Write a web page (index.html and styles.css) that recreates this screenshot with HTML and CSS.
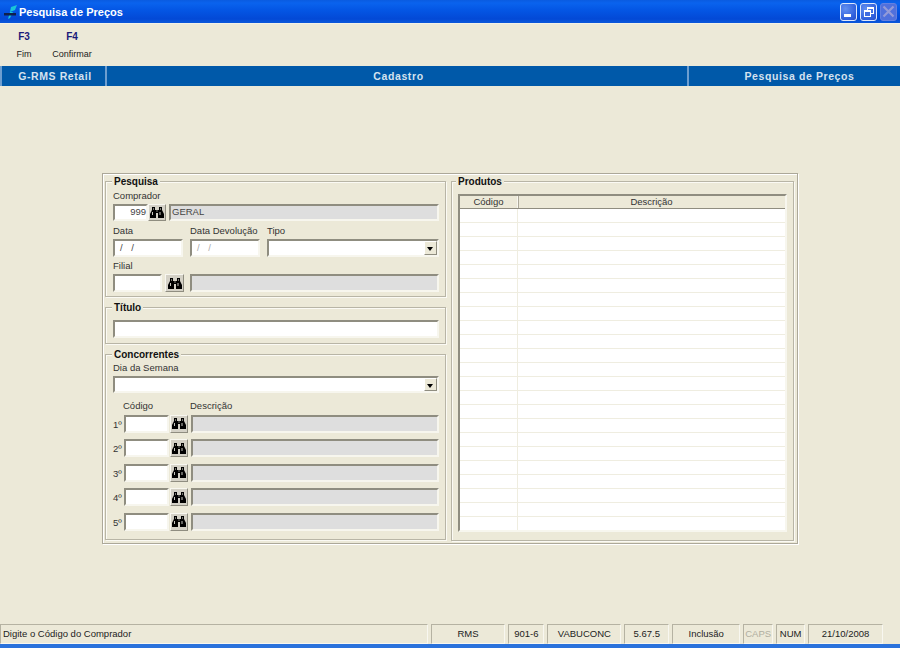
FILE: index.html
```html
<!DOCTYPE html>
<html lang="pt-BR">
<head>
<meta charset="utf-8">
<title>Pesquisa de Preços</title>
<link rel="stylesheet" href="styles.css">
</head>
<body>
<svg class="defs" width="0" height="0"><defs>
<symbol id="bino" viewBox="0 0 14 11">
<path d="M2 0h3v3h4v-3h3v3l2 4v4h-6v-5h-2v5h-6v-4l2-4z" fill="#000"/>
<path d="M3 1h1v2h-1zM10 1h1v2h-1zM6 3.500h2v1h-2z" fill="#77776f"/>
<path d="M2 5h1v3h-1zM9.500 5h1v3h-1z" fill="#c8c8c0"/>
</symbol>
</defs></svg>
<header class="titlebar">
  <svg class="appicon" width="14" height="14" viewBox="0 0 14 14"><path d="M13 0l-2 5-5 2 1-5z" fill="#19c6d8"/><path d="M6 7h3l-3 6-2 1z" fill="#19c6d8"/><rect x="0" y="8" width="12" height="2.500" fill="#10204a"/></svg>
  <span class="title">Pesquisa de Preços</span>
  <div class="winbtns">
    <div class="winbtn"><span class="min-glyph"></span></div>
    <div class="winbtn"><span class="res-back"></span><span class="res-front"></span></div>
    <div class="winbtn off"><svg width="13" height="13" viewBox="0 0 13 13"><path d="M1.500 1.500l10 10M11.500 1.500l-10 10" stroke="#939ad8" stroke-width="2.200"/></svg></div>
  </div>
</header>
<nav class="toolbar">
  <div class="tool t1"><b>F3</b><span>Fim</span></div>
  <div class="tool t2"><b>F4</b><span>Confirmar</span></div>
</nav>
<div class="bluebar">
  <div class="bseg b1">G-RMS Retail</div>
  <div class="bseg b2">Cadastro</div>
  <div class="bseg b3">Pesquisa de Preços</div>
</div>
<main class="main">
  <section class="panel">
    <div class="leftcol">
      <div class="group g-pesq">
        <span class="legend">Pesquisa</span>
        <label class="lbl">Comprador</label>
        <div class="row h17">
          <div class="field w35 num">999</div>
          <button class="find w18"><svg class="ico"><use href="#bino"/></svg></button>
          <div class="field ro grow ml3">GERAL</div>
        </div>
        <div class="row top4 gap7">
          <div class="col w70"><label class="lbl">Data</label><div class="field h18 date">/ /</div></div>
          <div class="col w70"><label class="lbl">Data Devolução</label><div class="field h18 date dim">/ /</div></div>
          <div class="col grow"><label class="lbl">Tipo</label><div class="field h18 combo"><span class="arrow"></span></div></div>
        </div>
        <label class="lbl top3">Filial</label>
        <div class="row h18">
          <div class="field w49"></div>
          <button class="find w19 ml3"><svg class="ico"><use href="#bino"/></svg></button>
          <div class="field ro grow ml6"></div>
        </div>
      </div>
      <div class="group g-tit">
        <span class="legend">Título</span>
        <div class="field h18"></div>
      </div>
      <div class="group g-conc">
        <span class="legend">Concorrentes</span>
        <label class="lbl">Dia da Semana</label>
        <div class="field h17 combo lblgap"><span class="arrow"></span></div>
        <div class="heads"><span class="hcod">Código</span><span>Descrição</span></div>
        <div class="lines">
          <div class="line"><span class="ord">1º</span><div class="field w45"></div><button class="find w18 ml1"><svg class="ico"><use href="#bino"/></svg></button><div class="field ro grow ml3"></div></div>
          <div class="line"><span class="ord">2º</span><div class="field w45"></div><button class="find w18 ml1"><svg class="ico"><use href="#bino"/></svg></button><div class="field ro grow ml3"></div></div>
          <div class="line"><span class="ord">3º</span><div class="field w45"></div><button class="find w18 ml1"><svg class="ico"><use href="#bino"/></svg></button><div class="field ro grow ml3"></div></div>
          <div class="line"><span class="ord">4º</span><div class="field w45"></div><button class="find w18 ml1"><svg class="ico"><use href="#bino"/></svg></button><div class="field ro grow ml3"></div></div>
          <div class="line"><span class="ord">5º</span><div class="field w45"></div><button class="find w18 ml1"><svg class="ico"><use href="#bino"/></svg></button><div class="field ro grow ml3"></div></div>
        </div>
      </div>
    </div>
    <div class="group g-prod">
      <span class="legend">Produtos</span>
      <div class="table">
        <div class="thead"><div class="th c1">Código</div><div class="th c2">Descrição</div></div>
        <div class="tbody">
          <div class="tr"><i></i></div><div class="tr"><i></i></div><div class="tr"><i></i></div><div class="tr"><i></i></div>
          <div class="tr"><i></i></div><div class="tr"><i></i></div><div class="tr"><i></i></div><div class="tr"><i></i></div>
          <div class="tr"><i></i></div><div class="tr"><i></i></div><div class="tr"><i></i></div><div class="tr"><i></i></div>
          <div class="tr"><i></i></div><div class="tr"><i></i></div><div class="tr"><i></i></div><div class="tr"><i></i></div>
          <div class="tr"><i></i></div><div class="tr"><i></i></div><div class="tr"><i></i></div><div class="tr"><i></i></div>
          <div class="tr"><i></i></div><div class="tr"><i></i></div><div class="tr"><i></i></div>
        </div>
      </div>
    </div>
  </section>
</main>
<footer class="status">
  <div class="sb s0">Digite o Código do Comprador</div>
  <div class="sb s1">RMS</div>
  <div class="sb s2">901-6</div>
  <div class="sb s3">VABUCONC</div>
  <div class="sb s4">5.67.5</div>
  <div class="sb s5">Inclusão</div>
  <div class="sb s6 dimtxt">CAPS</div>
  <div class="sb s7">NUM</div>
  <div class="sb s8">21/10/2008</div>
</footer>
<div class="bottomline"></div>
</body>
</html>
```
FILE: styles.css
```css
* { box-sizing: border-box; }
html, body { margin: 0; height: 100%; }
body {
  width: 900px; height: 648px; overflow: hidden;
  background: #ece9d8; color: #222;
  font: 9.5px/12px "Liberation Sans", Arial, sans-serif;
  display: flex; flex-direction: column;
}
.defs { position: absolute; }

.titlebar {
  height: 24px; flex: none; display: flex; align-items: center; padding: 0 3px 1px 4px;
  background: linear-gradient(#0a5be0 0, #0a63ee 3px, #0456e4 10px, #0349d6 19px, #0a56da 22px, #0a56da 23px, #f3f1e6 23px);
}
.appicon { flex: none; }
.title { margin-left: 1px; color: #fff; font: bold 11px/14px "Liberation Sans", Arial, sans-serif; }
.winbtns { margin-left: auto; display: flex; gap: 3px; }
.winbtn {
  position: relative; width: 17px; height: 18px; border-radius: 3px; border: 1px solid #dfe8fb;
  background: radial-gradient(circle at 30% 30%, #6390f0, #2f5fdc 70%, #2a50c8);
  display: flex; align-items: center; justify-content: center;
}
.winbtn.off { background: #5070dc; border-color: #6480e0; }
.min-glyph { position: absolute; left: 3px; bottom: 3px; width: 7px; height: 3px; background: #fff; }
.res-back { position: absolute; left: 6px; top: 3px; width: 7px; height: 7px; border: 1px solid #fff; border-top-width: 2px; }
.res-front { position: absolute; left: 3px; top: 6px; width: 7px; height: 7px; border: 1px solid #fff; border-top-width: 2px; background: #3f6ce0; }

.toolbar { height: 42px; flex: none; display: flex; padding-top: 7px; }
.tool { display: flex; flex-direction: column; align-items: center; font-size: 9px; }
.tool b { color: #1a1a78; font-size: 10px; line-height: 12px; margin-bottom: 5px; }
.t1 { width: 48px; }
.t2 { width: 48px; }

.bluebar { height: 20px; flex: none; display: flex; background: #0059a9; color: #d5e2ef; font: bold 10.5px/20px "Liberation Sans", Arial, sans-serif; letter-spacing: .6px; }
.bseg { text-align: center; }
.b1 { width: 107px; padding-left: 3px; border-left: 2px solid #6d9ed0; border-right: 2px solid #6d9ed0; }
.b2 { width: 580px; padding-left: 3px; }
.b3 { flex: 1; border-left: 2px solid #6d9ed0; padding-left: 11px; margin-right: 1px; }

.main { flex: 1; min-height: 0; padding: 87px 0 0 102px; }
.panel {
  width: 696px; height: 371px; padding: 7px 3px 3px;
  display: flex; gap: 5px;
  border: 1px solid #aca899; box-shadow: inset 1px 1px 0 #fff, 1px 1px 0 #fff;
}
.leftcol { width: 341px; flex: none; display: flex; flex-direction: column; gap: 10px; margin-left: -1px; }

.group { position: relative; border: 1px solid #b8b5a6; box-shadow: inset 1px 1px 0 #fbfaf4, 1px 1px 0 #fbfaf4; padding: 0 6px 0 7px; }
.legend { position: absolute; top: -7px; left: 6px; padding: 0 2px; background: #ece9d8; color: #111; font: bold 10px/13px "Liberation Sans", Arial, sans-serif; }
.g-pesq { height: 116px; padding-top: 8px; }
.g-tit { height: 37px; padding-top: 12px; }
.g-conc { height: 187px; padding-top: 7px; }
.g-prod { flex: none; width: 343px; height: 360px; padding: 12px 6px 0; }
.g-prod .legend { left: 4px; }

.lbl { display: block; height: 12px; margin-bottom: 2px; color: #333; white-space: nowrap; }
.row { display: flex; }
.col { display: flex; flex-direction: column; }
.h17 { height: 17px; } .h18 { height: 18px; }
.top4 { margin-top: 4px; } .top3 { margin-top: 3px; }
.gap7 { gap: 7px; }
.w35 { width: 35px; } .w45 { width: 45px; } .w49 { width: 49px; } .w70 { width: 70px; }
.w18 { width: 18px; } .w19 { width: 19px; }
.ml1 { margin-left: 1px; } .ml3 { margin-left: 3px; } .ml6 { margin-left: 6px; }
.grow { flex: 1; min-width: 0; }
.lblgap { margin-top: 1px; }

.field {
  position: relative; background: #fff; color: #444; padding: 0 0 0 1px; line-height: 12px;
  border: 2px solid; border-color: #8f8d80 #f7f6ee #f7f6ee #8f8d80; white-space: nowrap;
}
.field.ro { background: #dedede; }
.field.num { text-align: right; }
.field.date { padding-left: 5px; letter-spacing: 3px; line-height: 14px; }
.field.dim { color: #aaa; }

.find {
  padding: 0; display: flex; align-items: center; justify-content: center;
  background: #d4d1c6; border: 1px solid; border-color: #f8f7f0 #8f8d80 #8f8d80 #f8f7f0;
}
.ico { width: 14px; height: 11px; display: block; }

.arrow {
  position: absolute; right: 0; top: 0; bottom: 0; width: 13px;
  background: #ece9d8; border: 1px solid; border-color: #fff #8f8d80 #8f8d80 #fff;
}
.arrow::after {
  content: ""; position: absolute; left: 2px; top: 5px;
  border: 3px solid transparent; border-top-color: #000; border-top-width: 4px; border-bottom-width: 0;
}

.heads { display: flex; margin-top: 7px; margin-bottom: 3px; padding-left: 10px; color: #333; height: 12px; }
.hcod { width: 67px; }
.lines { display: flex; flex-direction: column; gap: 6.5px; }
.line { display: flex; height: 18px; align-items: stretch; }
.ord { width: 11px; line-height: 20px; color: #333; }

.table { width: 329px; height: 338px; border: 2px solid; border-color: #8f8d80 #f7f6ee #f7f6ee #8f8d80; background: #fff; overflow: hidden; }
.thead { display: flex; height: 13px; background: #ece9d8; border-bottom: 1px solid #8f8d80; box-shadow: 1px 0 0 #aca899; }
.th { text-align: center; line-height: 12px; color: #333; }
.c1 { width: 58px; border-right: 1px solid #f8f7f0; box-shadow: 1px 0 0 #aca899; }
.c2 { flex: 1; }
.tr { height: 14px; border-bottom: 1px solid #efede0; }
.tr i { display: block; width: 58px; height: 13px; border-right: 1px solid #efede0; }

.status { height: 20px; flex: none; display: flex; gap: 3px; padding-right: 17px; }
.sb {
  height: 20px; border: 1px solid; border-color: #b5b2a2 #f8f7f0 #f8f7f0 #b5b2a2;
  text-align: center; line-height: 18px; color: #222; font-size: 9.5px;
}
.s0 { width: 428px; text-align: left; padding-left: 2px; }
.s1 { width: 75px; } .s2 { width: 36px; } .s3 { width: 74px; } .s4 { width: 45px; }
.s5 { width: 68px; } .s6 { width: 30px; } .s7 { width: 29px; } .s8 { width: 75px; }
.dimtxt { color: #b0aea0; }
.bottomline { height: 4px; flex: none; background: #2a72dc; }
```
